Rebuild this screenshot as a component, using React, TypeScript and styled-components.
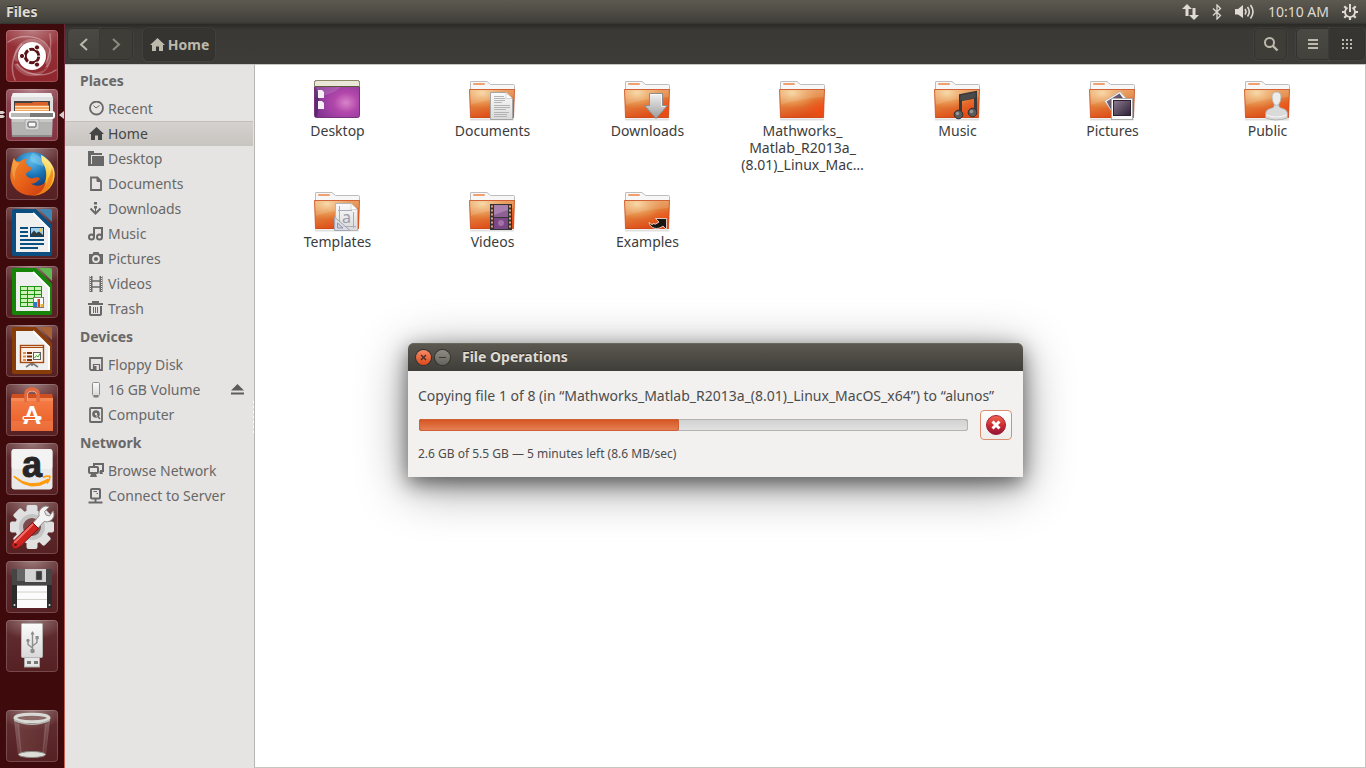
import React from "react";
import styled, { createGlobalStyle, css } from "styled-components";

const GlobalStyle = createGlobalStyle`
  *, *::before, *::after { box-sizing: border-box; }
  html, body { margin: 0; padding: 0; }
  body {
    font-family: "Noto Sans", "Open Sans", sans-serif;
    font-size: 14px;
    color: #3c3c3c;
    background: #ffffff;
  }
  button { font: inherit; color: inherit; border: 0; padding: 0; margin: 0; background: none; cursor: default; }
  a { color: inherit; text-decoration: none; cursor: default; }
  ul { list-style: none; margin: 0; padding: 0; }
  svg { display: block; flex: none; }
`;

/* ---------- page frame ---------- */

const Desktop = styled.div`
  display: flex;
  flex-direction: column;
  min-height: 100vh;
`;

const Panel = styled.header`
  display: flex;
  align-items: center;
  justify-content: space-between;
  height: 24px;
  padding: 0 8px 0 6px;
  color: #dfdbd2;
  background: linear-gradient(#5c5a50, #413f3a 92%, #33312d);
`;

const AppName = styled.span`
  font-weight: 700;
  font-size: 14px;
  line-height: 24px;
  text-shadow: 0 -1px 0 #2d2c28;
`;

const Indicators = styled.div`
  display: flex;
  align-items: center;
  gap: 13px;
`;

const IndicatorButton = styled.button`
  display: flex;
  align-items: center;
  height: 24px;
  font-size: 14px;
  line-height: 24px;
`;

const Workspace = styled.div`
  display: flex;
  flex: 1;
`;

/* ---------- launcher ---------- */

const Launcher = styled.nav`
  display: flex;
  flex-direction: column;
  justify-content: space-between;
  flex: none;
  width: 65px;
  padding: 6px 0 6px 6px;
  background: #3f0a0c;
  border-right: 1px solid;
  border-image: linear-gradient(#6b2636, #8e4049 45%, #c9604f) 1;
`;

const TileStack = styled.div`
  display: flex;
  flex-direction: column;
  gap: 7px;
`;

const Tile = styled.button<{ $tint?: string }>`
  position: relative;
  width: 52px;
  height: 52px;
  border-radius: 4px;
  background:
    radial-gradient(ellipse 34px 20px at 50% 0, rgba(255, 255, 255, 0.36), rgba(255, 255, 255, 0)),
    linear-gradient(rgba(255, 255, 255, 0.13), rgba(255, 255, 255, 0.07)),
    ${(p) => p.$tint ?? "#4a1013"};
  box-shadow: inset 0 0 0 1px rgba(255, 255, 255, 0.18);
`;

const RunningMarks = styled.svg`
  position: absolute;
  left: -6px;
  top: 0;
`;

/* ---------- file manager ---------- */

const FileWindow = styled.main`
  position: relative;
  display: flex;
  flex-direction: column;
  flex: 1;
  min-width: 0;
`;

const Toolbar = styled.div`
  display: flex;
  align-items: flex-start;
  height: 40px;
  padding: 4px 1px 0 2px;
  background: linear-gradient(#2a2926, #3a3935 6px, #3d3c38);
`;

const Spacer = styled.div`
  flex: 1;
`;

const ButtonGroup = styled.div`
  display: flex;
  margin-right: 10px;
`;

const ToolButton = styled.button<{ $side?: "left" | "right"; $look?: "raised" | "pressed"; $wide?: boolean }>`
  display: flex;
  align-items: center;
  justify-content: center;
  width: ${(p) => (p.$wide ? "36px" : "33px")};
  height: 32px;
  color: #bdb9ab;
  border: 1px solid #33322e;
  border-radius: 5px;
  ${(p) => p.$side === "left" && css`border-radius: 5px 0 0 5px;`}
  ${(p) => p.$side === "right" && css`border-radius: 0 5px 5px 0; border-left: 0;`}
  background: ${(p) => (p.$look === "raised" ? "linear-gradient(#4a4943, #42413c)" : p.$look === "pressed" ? "#363531" : "#3e3d38")};
  box-shadow: 0 0 0 1px rgba(255, 255, 255, 0.04);
`;

const CrumbButton = styled(ToolButton)`
  width: 72px;
  height: 33px;
  gap: 3px;
  font-weight: 700;
  font-size: 14px;
  background: #353430;
`;

const SearchButton = styled(ToolButton)`
  margin-right: 9px;
`;

const Columns = styled.div`
  display: flex;
  flex: 1;
`;

const Sidebar = styled.nav`
  position: relative;
  flex: none;
  width: 190px;
  color: #686868;
  background: #e6e4e2;
  border-top: 1px solid #c9c6c2;
  border-right: 1px solid #b8b5b2;
`;

const SectionTitle = styled.h2`
  margin: 0;
  padding-left: 15px;
  font-size: 14px;
  font-weight: 700;
  line-height: 31px;
`;

const PlaceRow = styled.li<{ $active?: boolean }>`
  display: flex;
  align-items: center;
  height: 25px;
  padding: 0 9px 0 23px;
  margin-right: 1px;
  ${(p) =>
    p.$active &&
    css`
      color: #454545;
      background: linear-gradient(#d5d2cf, #c8c4c0);
      box-shadow: inset 0 1px 0 #c3c0bc;
    `}
`;

const PlaceLink = styled.a`
  display: flex;
  align-items: center;
  flex: 1;
  gap: 4px;
  line-height: 25px;
  white-space: nowrap;
`;

const Grip = styled.svg`
  position: absolute;
  right: 0;
  top: 336px;
`;

const IconView = styled.ul`
  display: grid;
  flex: 1;
  grid-template-columns: repeat(auto-fill, 155px);
  grid-auto-rows: max-content;
  row-gap: 17px;
  && { padding: 14px 0 16px 5px; }
  background: #ffffff;
  border: solid #c9c6c2;
  border-width: 1px 1px 1px 0;
`;

const FileLink = styled.a`
  display: flex;
  flex-direction: column;
  align-items: center;
  gap: 1px;
`;

const FileName = styled.span`
  line-height: 17px;
  text-align: center;
  white-space: pre-line;
`;

/* ---------- progress dialog ---------- */

const DialogLayer = styled.div`
  position: absolute;
  inset: 0;
  display: flex;
  justify-content: center;
  align-items: flex-start;
  padding-top: 319px;
  pointer-events: none;
`;

const Dialog = styled.section`
  width: 615px;
  background: #f2f1f0;
  border-radius: 6px 6px 0 0;
  box-shadow: 0 10px 50px rgba(0, 0, 0, 0.42), 0 6px 20px rgba(0, 0, 0, 0.5);
  pointer-events: auto;
`;

const TitleBar = styled.div`
  display: flex;
  align-items: center;
  gap: 4px;
  height: 28px;
  padding-left: 8px;
  border-radius: 6px 6px 0 0;
  background: linear-gradient(#5b5950, #403e39);
  box-shadow: inset 0 1px 0 #6a675c;
`;

const DialogTitle = styled.h1`
  margin: 0 0 0 8px;
  font-size: 14px;
  line-height: 28px;
  color: #dfdbd2;
  text-shadow: 0 -1px 0 #2d2c28;
`;

const WindowButton = styled.button<{ $kind: "close" | "minimize" }>`
  display: flex;
  align-items: center;
  justify-content: center;
  width: 15px;
  height: 15px;
  border-radius: 50%;
  color: #45312a;
  background: ${(p) => (p.$kind === "close" ? "linear-gradient(#f58a68, #df4a1a)" : "linear-gradient(#8d8b83, #65635c)")};
  box-shadow: 0 0 0 1px #35332f;
`;

const DialogBody = styled.div`
  padding: 15px 10px 13px;
  color: #4c4c4c;
`;

const Message = styled.p`
  margin: 0;
  line-height: 20px;
  white-space: nowrap;
`;

const ProgressRow = styled.div`
  display: flex;
  align-items: center;
  gap: 12px;
  margin: 4px 1px;
`;

const Progress = styled.progress`
  appearance: none;
  flex: 1;
  height: 12px;
  min-width: 0;
  border: 0;
  &::-webkit-progress-bar {
    border-radius: 3px;
    background: linear-gradient(#d0d0d0, #e3e3e3);
    box-shadow: inset 0 0 0 1px #b4b2af, inset 0 1px 0 #8f8d8a;
  }
  &::-webkit-progress-value {
    border-radius: 3px;
    background: linear-gradient(#d4531f, #e68257);
    box-shadow: inset 0 0 0 1px #cf5f34, inset 0 1px 0 #a83c10;
  }
`;

const CancelButton = styled.button`
  display: flex;
  align-items: center;
  justify-content: center;
  width: 32px;
  height: 30px;
  border: 1px solid #dc8f70;
  border-radius: 4px;
  background: linear-gradient(#fdfdfd, #ededec);
`;

const Detail = styled.p`
  margin: 0;
  font-size: 12px;
  line-height: 20px;
`;

/* ---------- shared paint ---------- */

const DefsHolder = styled.svg`
  position: absolute;
`;

const SharedDefs = () => (
  <DefsHolder width="0" height="0" aria-hidden="true">
    <defs>
      <linearGradient id="folderBody" x1="0" y1="0" x2="0.35" y2="1">
        <stop offset="0" stopColor="#ecac6c" />
        <stop offset="0.45" stopColor="#e3853f" />
        <stop offset="1" stopColor="#de4d17" />
      </linearGradient>
      <radialGradient id="folderGlow" cx="0.28" cy="0.12" r="0.55">
        <stop offset="0" stopColor="#f8dba6" stopOpacity="0.9" />
        <stop offset="1" stopColor="#f0a860" stopOpacity="0" />
      </radialGradient>
      <radialGradient id="folderHeat" cx="0.98" cy="0.7" r="0.45">
        <stop offset="0" stopColor="#f84a10" stopOpacity="0.8" />
        <stop offset="1" stopColor="#f05018" stopOpacity="0" />
      </radialGradient>
      <linearGradient id="paper" x1="0" y1="0" x2="0" y2="1">
        <stop offset="0" stopColor="#fbfbfb" />
        <stop offset="1" stopColor="#d9d9d9" />
      </linearGradient>
      <linearGradient id="steel" x1="0" y1="0" x2="0" y2="1">
        <stop offset="0" stopColor="#f2f2f2" />
        <stop offset="1" stopColor="#9c9c9c" />
      </linearGradient>
      <radialGradient id="plum" cx="0.7" cy="0.6" r="0.75">
        <stop offset="0" stopColor="#d884c8" />
        <stop offset="0.35" stopColor="#b348ac" />
        <stop offset="1" stopColor="#7c3090" />
      </radialGradient>
      <linearGradient id="photo" x1="0" y1="0" x2="1" y2="1">
        <stop offset="0" stopColor="#8d7a90" />
        <stop offset="1" stopColor="#2b2033" />
      </linearGradient>
      <linearGradient id="orangeBag" x1="0" y1="0" x2="0" y2="1">
        <stop offset="0" stopColor="#f57d48" />
        <stop offset="1" stopColor="#e95b22" />
      </linearGradient>
      <radialGradient id="foxGlobe" cx="0.5" cy="0.2" r="0.7">
        <stop offset="0" stopColor="#62c0ee" />
        <stop offset="0.5" stopColor="#1c76b8" />
        <stop offset="1" stopColor="#12356b" />
      </radialGradient>
      <linearGradient id="foxFur" x1="0" y1="0" x2="1" y2="1">
        <stop offset="0" stopColor="#f08a2c" />
        <stop offset="0.5" stopColor="#e86118" />
        <stop offset="1" stopColor="#c93a12" />
      </linearGradient>
      <linearGradient id="foxTail" x1="0.6" y1="0" x2="0.3" y2="1">
        <stop offset="0" stopColor="#fff0a0" />
        <stop offset="0.5" stopColor="#fbc22c" />
        <stop offset="1" stopColor="#ec6f18" />
      </linearGradient>
      <linearGradient id="redDisc" x1="0" y1="0" x2="0" y2="1">
        <stop offset="0" stopColor="#ef6a52" />
        <stop offset="0.5" stopColor="#cf2b30" />
        <stop offset="1" stopColor="#8e1339" />
      </linearGradient>
      <linearGradient id="glass" x1="0" y1="0" x2="1" y2="0">
        <stop offset="0" stopColor="#a08080" stopOpacity="0.7" />
        <stop offset="0.2" stopColor="#7b4a4a" stopOpacity="0.5" />
        <stop offset="0.8" stopColor="#6b3a3a" stopOpacity="0.5" />
        <stop offset="1" stopColor="#a08080" stopOpacity="0.7" />
      </linearGradient>
    </defs>
  </DefsHolder>
);

/* ---------- launcher art ---------- */

const Art = ({ children }: { children: React.ReactNode }) => (
  <svg width="52" height="52" viewBox="0 0 52 52" aria-hidden="true">
    {children}
  </svg>
);

const DashArt = () => (
  <Art>
    <g fill="none" stroke="#ffffff" strokeLinecap="round">
      <path d="M2 12C14 4 32 5 40 14C46 21 46 30 41 37" strokeOpacity=".35" strokeWidth="1.5" />
      <path d="M44 4C46 16 43 27 40 33" strokeOpacity=".3" strokeWidth="1.5" />
      <path d="M9 50C3 36 8 22 16 14" strokeOpacity=".35" strokeWidth="1.5" />
      <path d="M50 40C38 48 20 46 11 34" strokeOpacity=".35" strokeWidth="1.5" />
    </g>
    <path d="M8 30C7 13 22 5 35 11C46 17 46 33 38 40C46 26 38 12 26 12C15 12 10 20 12 32Z" fill="#fff" opacity=".22" />
    <path d="M12 34C16 45 33 46 43 36C34 52 13 48 8 34Z" fill="#fff" opacity=".2" />
    <circle cx="26" cy="26" r="14" fill="#ffffff" />
    <circle cx="26" cy="26" r="6.8" fill="none" stroke="#5c1216" strokeWidth="3" strokeDasharray="12.8 1.44" strokeDashoffset="-.7" />
    <g fill="#5c1216" stroke="#fff" strokeWidth="1">
      <circle cx="16" cy="26" r="2.6" />
      <circle cx="31" cy="17.4" r="2.6" />
      <circle cx="31" cy="34.6" r="2.6" />
    </g>
  </Art>
);

const CabinetArt = () => (
  <Art>
    <path d="M7 4H45L47 9V24H5V9Z" fill="#dedede" />
    <path d="M7 4H45L46.500 8H5.500Z" fill="#f2f2f2" />
    <rect x="8" y="12" width="36" height="14" fill="#40403f" />
    <path d="M9 14H26L27 13H42V26H9Z" fill="#d9622c" />
    <path d="M9 16.500H43V26H9Z" fill="#f3a45c" />
    <path d="M9 17.500H43M9 20.500H43" stroke="#fde3bd" strokeWidth="1" />
    <path d="M5 24H47L46 48H6Z" fill="#b3b3b2" />
    <path d="M6 30H46V33H6Z" fill="#c8c8c7" />
    <path d="M6 46H46V48H6Z" fill="#8c8c8c" />
    <rect x="19" y="30" width="14" height="11" rx="2" fill="#d6d6d6" stroke="#a8a8a8" />
    <rect x="22" y="33" width="8" height="5" rx="1" fill="#f6f6f6" stroke="#4d4d4d" />
    <rect x="3" y="22" width="46" height="8" rx="3" fill="#ffffff" />
    <rect x="5" y="24" width="19" height="4" fill="#b9b9b7" />
    <rect x="24" y="24" width="23" height="4" fill="#7b7b79" />
  </Art>
);

const FirefoxArt = () => (
  <Art>
    <circle cx="26" cy="25" r="21" fill="url(#foxGlobe)" />
    <path d="M27 5C34 7 39 13 37 19C35 16 31 17 29 15C25 14 22 9 27 5Z" fill="#8fd4f4" opacity=".45" />
    <path d="M35 7C45 12 50 21 48.500 29C47 41 37 48 26 47.500C33 44 39 38 40 30C41 23 39 18 36 14Z" fill="url(#foxTail)" />
    <path d="M46 20C50 32 43 46 28 47.500C36 43 41 38 42 31C44 28 45 24 46 20Z" fill="#ee7a1c" opacity=".75" />
    <path d="M8 10C9 13 11 14 14 13.500C17 11 20 11 21 11C20 13 19.500 15 21 17C22 19 24.500 18.500 25.500 20C25 23 21 24 20 25.500C20 29 24 31 28 30C31 29 33 29 34 31C31 33 30 36 25 35.500C29 39 36 38 40 34C38 42 33 47.500 25 47.500C12 47 3 37 4.500 25C5 20 6 15 8 10Z" fill="url(#foxFur)" />
    <path d="M8 10C9 14 11 15 14 15C10 19 8 26 9 32C6 28 5 17 8 10Z" fill="#f7a94a" opacity=".7" />
  </Art>
);

const DocArt = ({ main, fold, children }: { main: string; fold: string; children: React.ReactNode }) => (
  <Art>
    <path d="M6 4Q6 2 8 2H30L46 18V47Q46 49 44 49H8Q6 49 6 47Z" fill={main} />
    <path d="M33 2H44Q46 2 46 4V15Z" fill={fold} />
    <path d="M10 6H27L43 22V45H10Z" fill="#efefef" />
    <path d="M27 6L43 22V45" fill="none" stroke="#ffffff" strokeWidth="2" />
    {children}
  </Art>
);

const WriterArt = () => (
  <DocArt main="#0b4f80" fold="#3f86b4">
    <path d="M14 21H22M14 25H22M14 29H22M14 33H38M14 37H38M14 41H32" stroke="#0b4f80" strokeWidth="2" />
    <rect x="24.500" y="20.500" width="13" height="9" fill="#9fd0ee" stroke="#0b3f68" />
    <circle cx="34.500" cy="23" r="1.700" fill="#f2c430" />
    <path d="M25 29V27L28 23.500L30.500 26L33 24.500L37 28V29Z" fill="#2f3b42" />
  </DocArt>
);

const CalcArt = () => (
  <DocArt main="#168408" fold="#5fb851">
    <rect x="14" y="20" width="22" height="21" fill="#1f9413" />
    <g fill="#ccf2b8">
      {[21, 25, 29, 33, 37].map((y) => [15, 22, 29].map((x) => <rect key={`${x}-${y}`} x={x} y={y} width="6" height="3" />))}
    </g>
    <rect x="27.500" y="31.500" width="10" height="10" fill="#fff" stroke="#7a7a7a" />
    <rect x="28" y="36" width="3" height="5" fill="#2a7ac0" />
    <rect x="31.500" y="33" width="2.500" height="8" fill="#d8431c" />
    <rect x="34.500" y="38" width="3" height="3" fill="#f0b428" />
  </DocArt>
);

const ImpressArt = () => (
  <DocArt main="#873c0a" fold="#a86236">
    <path d="M26 38L20 42M26 38L32 42M26 38V41" stroke="#7c7c7c" strokeWidth="1.700" />
    <rect x="14.500" y="20.500" width="23" height="17" fill="#fdf3ea" stroke="#a44a10" strokeWidth="1.400" />
    <path d="M15 22.500H37" stroke="#a44a10" />
    <path d="M17 28H20M17 31.500H20M17 35H20" stroke="#e68a4a" strokeWidth="2" />
    <path d="M21 28H26M21 31.500H26M21 35H26" stroke="#74320a" strokeWidth="2" />
    <rect x="27.500" y="27.500" width="7" height="7" fill="#f4fff0" stroke="#606060" />
    <path d="M28.500 33L30.500 30.500L32 32L34 28.500" fill="none" stroke="#35a02a" />
  </DocArt>
);

const SoftwareArt = () => (
  <Art>
    <path d="M6 10H46L47 14V22H5V14Z" fill="#cf4f20" />
    <path d="M5 14H47V47H5Z" fill="url(#orangeBag)" />
    <path d="M5 14H47V17H5Z" fill="#f9986c" opacity=".5" />
    <path d="M5 37H47V47H5Z" fill="#ffffff" opacity=".1" />
    <path d="M20 18V10Q20 5 26 5Q32 5 32 10V18" fill="none" stroke="#e06a42" strokeWidth="3.500" />
    <path d="M21.500 17V10Q22 7 26 7Q30 7 30.500 10" fill="none" stroke="#f9a98a" strokeWidth="1" />
    <text x="26" y="40" textAnchor="middle" fontFamily="Lato, sans-serif" fontWeight="900" fontSize="24" fill="#ffffff">A</text>
    <rect x="16.500" y="32" width="19" height="4" rx="1.500" fill="#ffffff" />
    <rect x="18" y="33" width="11" height="2" fill="#f0652c" />
  </Art>
);

const AmazonArt = () => (
  <Art>
    <rect x="5.500" y="6" width="41" height="40.500" rx="3" fill="#e9e9e9" />
    <rect x="5.500" y="6" width="41" height="20" rx="3" fill="#f7f7f7" opacity=".7" />
    <text x="26" y="33.500" textAnchor="middle" fontFamily='"Liberation Sans", sans-serif' fontWeight="700" fontSize="36" fill="#262626" stroke="#262626" strokeWidth="1">a</text>
    <path d="M8 33Q25 47 42 36L43 38Q25 50 8 34Z" fill="#ff9a0a" stroke="#ff9a0a" />
    <path d="M37 34.500Q41 32.500 44 33.500Q44 37 41 40.500" fill="none" stroke="#ff9a0a" strokeWidth="1.700" />
  </Art>
);

const SettingsArt = () => (
  <Art>
    <g fill="#e0e0e0">
      {[0, 45, 90, 135].map((a) => (
        <rect key={a} x="20.500" y="3" width="11" height="44" rx="2" transform={`rotate(${a} 26 25)`} />
      ))}
      <circle cx="26" cy="25" r="17" />
    </g>
    <circle cx="26" cy="25" r="13" fill="#c4c4c4" />
    <circle cx="26" cy="25" r="9" fill="#7c4a4b" />
    <path d="M26 22L33 14Q32 8 37 5Q40 3 43 5L38.500 9.500L40 13L43.500 14L47 9Q49.500 14 45.500 18Q42 21 38 19.500L31 27Z" fill="#f3f3f3" stroke="#8f8f8f" />
    <path d="M26.500 20.500L32.500 26.500L13 45.500Q9 48 6.500 45.500Q4.500 43 7 39.500Z" fill="#cf2420" stroke="#7c1010" />
    <path d="M26.500 22.500L9 40" stroke="#f2706a" strokeWidth="2" strokeLinecap="round" />
    <circle cx="9.500" cy="42.800" r="1.400" fill="#5c0f0f" />
  </Art>
);

const FloppyArt = () => (
  <Art>
    <path d="M6 8H44L46 10V47H6Z" fill="#2c2c2c" />
    <path d="M6 8H44L46 10V24H6Z" fill="#454545" />
    <rect x="11" y="8" width="8" height="12" fill="#666" />
    <rect x="19" y="8" width="21" height="13" fill="#d4d4d4" />
    <rect x="30" y="10" width="6" height="9" fill="#3a3a3a" stroke="#9a9a9a" strokeWidth=".5" />
    <rect x="11" y="24" width="30" height="23" fill="#fbfbfb" />
    <path d="M11 31H41M11 38.500H41" stroke="#d0d0c8" />
    <path d="M11 24.500H41" stroke="#8a8a8a" />
    <circle cx="8.500" cy="44" r="1" fill="#ddd" />
    <circle cx="43.500" cy="44" r="1" fill="#ddd" />
  </Art>
);

const UsbArt = () => (
  <Art>
    <rect x="18.500" y="36" width="15" height="11" fill="#e6e6e6" stroke="#a8a8a8" />
    <rect x="21" y="41" width="4" height="3" fill="#777" />
    <rect x="28" y="41" width="4" height="3" fill="#777" />
    <rect x="15.500" y="3.500" width="21" height="34" rx="1" fill="url(#paper)" stroke="#b5b5b5" />
    <g fill="none" stroke="#8d8d8d" strokeWidth="1.400">
      <path d="M26.500 12V31M26.500 28L22 24.500V21M26.500 26L31 22.500V18" />
    </g>
    <g fill="#8d8d8d">
      <path d="M24.500 14.500L26.500 11L28.500 14.500Z" />
      <circle cx="22" cy="20.500" r="1.700" />
      <rect x="29.500" y="16" width="3.200" height="3.200" />
      <circle cx="26.500" cy="31" r="2.300" />
    </g>
  </Art>
);

const TrashArt = () => (
  <Art>
    <path d="M8 9L12 45Q26 50 40 45L44 9Z" fill="url(#glass)" />
    <path d="M12 14L15 43M40 14L37 43" stroke="#fff" strokeOpacity=".15" strokeWidth="1.500" />
    <ellipse cx="26" cy="44.500" rx="13.500" ry="3" fill="#deded9" stroke="#8b8b88" />
    <ellipse cx="26" cy="8" rx="17" ry="3.800" fill="#8a6868" stroke="#d9d9d5" strokeWidth="3" />
    <path d="M8 9Q26 18 44 9V11Q26 19 8 11Z" fill="#b4b4b0" />
  </Art>
);

const launcherItems: { name: string; art: React.ReactNode; tint?: string }[] = [
  { name: "Dash", art: <DashArt />, tint: "#86161d" },
  { name: "Files", art: <CabinetArt />, tint: "#7a2634" },
  { name: "Firefox", art: <FirefoxArt /> },
  { name: "LibreOffice Writer", art: <WriterArt /> },
  { name: "LibreOffice Calc", art: <CalcArt /> },
  { name: "LibreOffice Impress", art: <ImpressArt /> },
  { name: "Ubuntu Software Center", art: <SoftwareArt /> },
  { name: "Amazon", art: <AmazonArt /> },
  { name: "System Settings", art: <SettingsArt /> },
  { name: "Floppy Disk", art: <FloppyArt /> },
  { name: "16 GB Volume", art: <UsbArt /> },
];

/* ---------- symbolic icons ---------- */

const Symbol16 = ({ children, color = "currentColor" }: { children: React.ReactNode; color?: string }) => (
  <svg width="16" height="16" viewBox="0 0 16 16" fill="none" stroke={color} strokeWidth="2" aria-hidden="true">
    {children}
  </svg>
);

const HomeSymbol = () => (
  <Symbol16>
    <path d="M8.500 1L1 8H3V14H7V9.500H10V14H14V8H16Z" fill="currentColor" stroke="none" />
  </Symbol16>
);

const symbols: Record<string, React.ReactNode> = {
  recent: (
    <Symbol16>
      <circle cx="8.500" cy="7" r="6.500" strokeWidth="1.800" />
      <path d="M5.500 4.500L8 7L11.500 4.500" strokeWidth="1" />
    </Symbol16>
  ),
  home: <HomeSymbol />,
  desktop: (
    <Symbol16>
      <path d="M0 14V0H6V2H14V4H3V14Z" fill="currentColor" stroke="none" />
      <path d="M4 5H16V15H4ZM0 13H5V15H0Z" fill="currentColor" stroke="none" />
    </Symbol16>
  ),
  documents: (
    <Symbol16>
      <path d="M3 1.500H9.500L13 5V14H3Z" strokeWidth="1.800" />
      <path d="M9 1.500V5.500H13" fill="currentColor" strokeWidth="1" />
    </Symbol16>
  ),
  downloads: (
    <Symbol16>
      <path d="M2.500 7.500L7.500 12.500L12.500 7.500" />
      <path d="M6 1H9V3.500H6ZM6 5H9V7.500H6ZM7 7H8V12H7Z" fill="currentColor" stroke="none" />
    </Symbol16>
  ),
  music: (
    <Symbol16>
      <circle cx="3.500" cy="11" r="2.500" />
      <circle cx="11.500" cy="11" r="2.500" />
      <path d="M6 11V2H14V11" />
    </Symbol16>
  ),
  pictures: (
    <Symbol16>
      <path d="M1 3H4.500L5.500 1H10.500L11.500 3H15V13H1Z" fill="currentColor" stroke="none" />
      <circle cx="8" cy="8" r="3" stroke="#e6e4e2" strokeWidth="1.800" />
    </Symbol16>
  ),
  videos: (
    <Symbol16>
      <path d="M3 0V16M13 0V16" strokeWidth="3" />
      <path d="M4 5H12M4 11H12" strokeWidth="1.300" />
      <path d="M2.500 0V16M13.500 0V16" stroke="#e6e4e2" strokeWidth="1" strokeDasharray="1 1" />
    </Symbol16>
  ),
  trash: (
    <Symbol16>
      <path d="M0 3H15" />
      <path d="M4 0H11V2H4Z" fill="currentColor" stroke="none" />
      <path d="M2 5V13Q2 14 3 14H12Q13 14 13 13V5" />
      <path d="M5.500 6V12M7.500 6V12M9.500 6V12" strokeWidth="1" />
    </Symbol16>
  ),
  floppy: (
    <Symbol16>
      <path d="M5 13H3.500Q2 13 2 11.500V1H14V13H11.500" strokeWidth="1.800" />
      <path d="M5.500 7.500H11.500V13.500H5.500Z" strokeWidth="1.200" />
      <path d="M6 9H8.500V13H6Z" fill="currentColor" stroke="none" />
    </Symbol16>
  ),
  volume: (
    <Symbol16>
      <rect x="4.500" y=".5" width="7" height="13" rx="1" fill="url(#paper)" stroke="#8c8c8c" strokeWidth="1" />
      <path d="M5.500 14.500H10.500" stroke="#7c7c7c" strokeWidth="2" />
    </Symbol16>
  ),
  computer: (
    <Symbol16>
      <rect x="2" y="1" width="12" height="14" rx="1" strokeWidth="1.800" />
      <circle cx="8" cy="7" r="3.800" fill="currentColor" stroke="none" />
      <circle cx="8" cy="7" r="1.200" fill="#e6e4e2" stroke="none" />
      <path d="M8.500 8.500L12 12.500" strokeWidth="1.400" stroke="#e6e4e2" />
      <path d="M9.500 9L12 12" strokeWidth="1.400" />
    </Symbol16>
  ),
  network: (
    <Symbol16>
      <path d="M6 3V1H15V8H12" />
      <rect x="1" y="4" width="9" height="6" rx="1" />
      <path d="M3 11H8L9 14H2ZM11.500 8H14L15 11H11.500Z" fill="currentColor" stroke="none" />
    </Symbol16>
  ),
  server: (
    <Symbol16>
      <rect x="3" y="1" width="9" height="9.500" rx="1" />
      <path d="M7.500 11V15M0.500 14.500H14.500" />
      <path d="M5.500 3.500H9M8.500 5.500H10" strokeWidth="1" />
    </Symbol16>
  ),
};

const sections: { title: string; rows: { label: string; icon: string; active?: boolean; eject?: boolean }[] }[] = [
  {
    title: "Places",
    rows: [
      { label: "Recent", icon: "recent" },
      { label: "Home", icon: "home", active: true },
      { label: "Desktop", icon: "desktop" },
      { label: "Documents", icon: "documents" },
      { label: "Downloads", icon: "downloads" },
      { label: "Music", icon: "music" },
      { label: "Pictures", icon: "pictures" },
      { label: "Videos", icon: "videos" },
      { label: "Trash", icon: "trash" },
    ],
  },
  {
    title: "Devices",
    rows: [
      { label: "Floppy Disk", icon: "floppy" },
      { label: "16 GB Volume", icon: "volume", eject: true },
      { label: "Computer", icon: "computer" },
    ],
  },
  {
    title: "Network",
    rows: [
      { label: "Browse Network", icon: "network" },
      { label: "Connect to Server", icon: "server" },
    ],
  },
];

/* ---------- folder art ---------- */

const FileArt = ({ children }: { children: React.ReactNode }) => (
  <svg width="47" height="42" viewBox="0 0 47 42" aria-hidden="true">
    {children}
  </svg>
);

const Folder = ({ children }: { children?: React.ReactNode }) => (
  <FileArt>
    <path d="M1 40.500H45" stroke="#000" strokeOpacity=".12" strokeWidth="2" />
    <path d="M1.500 12V3Q1.500 2.500 2 2.500H18L21.500 5.500H44.500Q45.500 5.500 45.500 6.500V12Z" fill="#f7f7f7" stroke="#bdbdbd" />
    <path d="M5 5H15" stroke="#f0a070" strokeWidth="2" strokeLinecap="round" />
    <path d="M0.500 10.500H45.500L44.500 39H1.500Z" fill="url(#folderBody)" />
    <path d="M0.500 10.500H45.500L44.500 39H1.500Z" fill="url(#folderHeat)" />
    <path d="M0.500 10.500H45.500L44.500 39H1.500Z" fill="url(#folderGlow)" />
    <path d="M1 11H45L44.800 18Q22 19 1.500 26Z" fill="#fff" opacity=".12" />
    <path d="M0.500 10.500H45.500L44.500 38.500H1.500Z" fill="none" stroke="#c94a1c" strokeOpacity=".8" />
    {children}
  </FileArt>
);

const fileArt: Record<string, React.ReactNode> = {
  desktop: (
    <FileArt>
      <rect x=".5" y="1.500" width="45" height="37" rx="2" fill="url(#plum)" stroke="#77307c" />
      <path d="M1 7H28Q20 16 1 18Z" fill="#fff" opacity=".14" />
      <path d="M1 8Q8 18 3 38H1Z" fill="#352050" opacity=".5" />
      <path d="M.5 3.500Q.5 1.500 2.500 1.500H43.500Q45.500 1.500 45.500 3.500V7.500H.5Z" fill="#e9e7d8" stroke="#8d8a6a" />
      <path d="M1 7.500H45" stroke="#5c5a3a" />
      <path d="M4 11H8L10 13V19H4ZM4 22H8L10 24V30H4Z" fill="#f3eff3" />
    </FileArt>
  ),
  documents: (
    <Folder>
      <path d="M21.500 13.500H37L43.500 20V40.500H21.500Z" fill="url(#paper)" stroke="#a5a5a5" />
      <path d="M37 13.500V19.500H43.500Z" fill="#fff" stroke="#c5c5c5" strokeWidth=".7" />
      <path d="M25 17.500H35M25 19.500H36M25 21.500H36M25 23.500H33M25 26.500H41M25 28.500H41M25 30.500H37M25 33.500H40M25 35.500H38M25 37.500H38" stroke="#b4b4b4" strokeWidth="1" />
    </Folder>
  ),
  downloads: (
    <Folder>
      <path d="M25.500 14.500H38.500V26.500H43.500L32 39.500L20.500 26.500H25.500Z" fill="url(#steel)" stroke="#8c8c8c" />
      <path d="M26.500 15.500H37.500V27.500H41" fill="none" stroke="#fff" strokeOpacity=".7" />
    </Folder>
  ),
  folder: <Folder />,
  music: (
    <Folder>
      <path d="M26.500 37V16.500L41.500 13.500V33" fill="none" stroke="#3a3a3a" strokeWidth="3" />
      <path d="M26 16L42 13V19L26 22Z" fill="#4a4a4a" stroke="#333" strokeWidth=".7" />
      <circle cx="24.500" cy="35.500" r="4.300" fill="#5c5c5c" stroke="#303030" />
      <circle cx="38.500" cy="33.500" r="4.300" fill="#5c5c5c" stroke="#303030" />
      <circle cx="23.500" cy="34.500" r="1.700" fill="#9a9a9a" />
      <circle cx="37.500" cy="32.500" r="1.700" fill="#9a9a9a" />
    </Folder>
  ),
  pictures: (
    <Folder>
      <path d="M15.500 22L31 12.500L38 20L26 37Z" fill="#f5f5f5" stroke="#aaa" strokeWidth=".7" />
      <path d="M17.500 22.500L30.500 14.500L36 22L24 34Z" fill="url(#photo)" />
      <rect x="22.500" y="19.500" width="21" height="21" fill="#fafafa" stroke="#aaa" />
      <rect x="24.500" y="21.500" width="17" height="15" fill="url(#photo)" stroke="#2b2033" />
    </Folder>
  ),
  public: (
    <Folder>
      <path d="M30 23V27.500Q29 29 26 29.500Q22 30.500 21.500 34V39Q32 43 43.500 39V34Q43 30.500 39 29.500Q36 29 35 27.500V23Z" fill="#dadada" stroke="#a6a6a6" strokeWidth=".8" />
      <path d="M32.500 13Q37 13 37 18Q37 22 35 25Q32.500 28 30 25Q28 22 28 18Q28 13 32.500 13Z" fill="#ececec" stroke="#b0b0b0" strokeWidth=".8" />
      <path d="M22.500 36Q32 40 42.500 36" fill="none" stroke="#fff" strokeOpacity=".8" />
    </Folder>
  ),
  templates: (
    <Folder>
      <path d="M21.500 13.500H37L43.500 20V40.500H21.500Z" fill="url(#paper)" stroke="#b5b5b5" />
      <path d="M37 13.500V19.500H43.500Z" fill="#fff" stroke="#c5c5c5" strokeWidth=".7" />
      <path d="M24 20.500H38M25.500 16V38M39.500 22V38M24 36.500H42" stroke="#a9abb8" strokeWidth="1" />
      <text x="32.500" y="32.500" textAnchor="middle" fontFamily='"Noto Sans", sans-serif' fontSize="16" fill="#9a9cab">a</text>
      <path d="M20.500 27V40.500H36Z" fill="#dcdfe8" fillOpacity=".8" stroke="#a2a4b4" />
      <path d="M23.500 33V38H29Z" fill="none" stroke="#8c8fa5" />
    </Folder>
  ),
  videos: (
    <Folder>
      <rect x="21" y="14" width="22" height="26" fill="#333" />
      <rect x="25" y="15" width="14" height="12" fill="#8d6194" />
      <rect x="25" y="28" width="14" height="11" fill="#7b4784" />
      <path d="M25 15H39V20L25 25Z" fill="#c5a0c8" opacity=".5" />
      <circle cx="32" cy="33" r="3" fill="#b583b8" opacity=".7" />
      <path d="M23 15.500V39M41 15.500V39" stroke="#e8a078" strokeWidth="2" strokeDasharray="2 2" />
    </Folder>
  ),
  examples: (
    <Folder>
      <path d="M25 32.500C26 38.500 34 40.500 39 36L42.500 39.500V28.500H31.500L35 32Q31 35.500 29 33.500Q29 36 25 32.500Z" fill="#1b1512" stroke="#f4ece6" strokeWidth=".8" />
    </Folder>
  ),
};

const files = [
  { name: "Desktop", art: "desktop" },
  { name: "Documents", art: "documents" },
  { name: "Downloads", art: "downloads" },
  { name: "Mathworks_\nMatlab_R2013a_\n(8.01)_Linux_Mac…", art: "folder" },
  { name: "Music", art: "music" },
  { name: "Pictures", art: "pictures" },
  { name: "Public", art: "public" },
  { name: "Templates", art: "templates" },
  { name: "Videos", art: "videos" },
  { name: "Examples", art: "examples" },
];

/* ---------- app ---------- */

export default function App() {
  return (
    <Desktop>
      <GlobalStyle />
      <SharedDefs />
      <Panel>
        <AppName>Files</AppName>
        <Indicators>
          <IndicatorButton aria-label="Network">
            <svg width="17" height="16" viewBox="0 0 17 16" fill="currentColor">
              <path d="M5 0L10 5H6.500V12H3.500V5H0Z" />
              <path d="M12 16L7 11H10.500V4H13.500V11H17Z" />
            </svg>
          </IndicatorButton>
          <IndicatorButton aria-label="Bluetooth">
            <svg width="10" height="16" viewBox="0 0 10 16" fill="none" stroke="currentColor" strokeWidth="1.300">
              <path d="M1 4.500L8.500 11.500L5 15V1L8.500 4.500L1 11.500" />
            </svg>
          </IndicatorButton>
          <IndicatorButton aria-label="Sound">
            <svg width="20" height="16" viewBox="0 0 20 16" fill="none" stroke="currentColor" strokeWidth="1.600">
              <path d="M0 5H3L8 1V14L3 10.500H0Z" fill="currentColor" stroke="none" />
              <path d="M10 5Q12 7.800 10 10.500M12.500 3Q16 7.800 12.500 12.500" />
              <path d="M15.500 1Q20.500 7.800 15.500 14.500" />
            </svg>
          </IndicatorButton>
          <IndicatorButton>10:10 AM</IndicatorButton>
          <IndicatorButton aria-label="Session">
            <svg width="16" height="16" viewBox="0 0 16 16" fill="none" stroke="currentColor">
              <path d="M5.500 3.700A5 5 0 1 0 10.500 3.700" strokeWidth="1.800" />
              <path d="M8 0V8" strokeWidth="2" />
              <path d="M3 8H0M16 8H13M8 13V16M2.300 2.300L4.500 4.500M13.700 2.300L11.500 4.500M2.300 13.700L4.500 11.500M13.700 13.700L11.500 11.500" strokeWidth="2.200" />
            </svg>
          </IndicatorButton>
        </Indicators>
      </Panel>

      <Workspace>
        <Launcher aria-label="Launcher">
          <TileStack>
            {launcherItems.map((item) => (
              <Tile key={item.name} aria-label={item.name} $tint={item.tint}>
                {item.art}
                {item.name === "Files" && (
                  <RunningMarks width="64" height="52" viewBox="0 0 64 52" fill="#d9cfd0">
                    <path d="M0 22H3L5 23.500L3 25H0ZM0 26H3L5 27.500L3 29H0ZM64 22V30L59 26Z" />
                  </RunningMarks>
                )}
              </Tile>
            ))}
          </TileStack>
          <Tile aria-label="Trash">
            <TrashArt />
          </Tile>
        </Launcher>

        <FileWindow>
          <Toolbar>
            <ButtonGroup>
              <ToolButton $side="left" $look="raised" aria-label="Back">
                <svg width="9" height="13" viewBox="0 0 9 13" fill="none" stroke="currentColor" strokeWidth="2">
                  <path d="M8 1L2 6.500L8 12" />
                </svg>
              </ToolButton>
              <ToolButton $side="right" aria-label="Forward">
                <svg width="9" height="13" viewBox="0 0 9 13" fill="none" stroke="#8d8a80" strokeWidth="2">
                  <path d="M1 1L7 6.500L1 12" />
                </svg>
              </ToolButton>
            </ButtonGroup>
            <CrumbButton>
              <HomeSymbol />
              Home
            </CrumbButton>
            <Spacer />
            <SearchButton aria-label="Search">
              <svg width="16" height="16" viewBox="0 0 16 16" fill="none" stroke="currentColor">
                <circle cx="6.500" cy="6.500" r="4.500" strokeWidth="2" />
                <path d="M10 10L14.500 14.500" strokeWidth="2.400" />
              </svg>
            </SearchButton>
            <ToolButton $side="left" $look="raised" aria-label="List view">
              <svg width="10" height="10" viewBox="0 0 10 10" stroke="currentColor" strokeWidth="2">
                <path d="M0 1H10M0 5H10M0 9H10" />
              </svg>
            </ToolButton>
            <ToolButton $side="right" $look="pressed" $wide aria-label="Icon view">
              <svg width="10" height="10" viewBox="0 0 10 10" stroke="currentColor" strokeWidth="2" strokeDasharray="2 2">
                <path d="M0 1H10M0 5H10M0 9H10" />
              </svg>
            </ToolButton>
          </Toolbar>

          <Columns>
            <Sidebar aria-label="Places">
              {sections.map((section) => (
                <React.Fragment key={section.title}>
                  <SectionTitle>{section.title}</SectionTitle>
                  <ul>
                    {section.rows.map((row) => (
                      <PlaceRow key={row.label} $active={row.active}>
                        <PlaceLink href="#">
                          {symbols[row.icon]}
                          {row.label}
                        </PlaceLink>
                        {row.eject && (
                          <button aria-label="Eject">
                            <svg width="13" height="12" viewBox="0 0 13 12" fill="#5c5c5c">
                              <path d="M6.500 0L13 6.500H0ZM0 8.500H13V10.500H0Z" />
                            </svg>
                          </button>
                        )}
                      </PlaceRow>
                    ))}
                  </ul>
                </React.Fragment>
              ))}
              <Grip width="1" height="32" viewBox="0 0 1 32" stroke="#ffffff" strokeWidth="1" strokeDasharray="2 3">
                <path d="M.5 0V32" />
              </Grip>
            </Sidebar>

            <IconView>
              {files.map((file) => (
                <li key={file.name}>
                  <FileLink href="#">
                    {fileArt[file.art]}
                    <FileName>{file.name}</FileName>
                  </FileLink>
                </li>
              ))}
            </IconView>
          </Columns>

          <DialogLayer>
            <Dialog role="dialog" aria-labelledby="dialog-title">
              <TitleBar>
                <WindowButton $kind="close" aria-label="Close">
                  <svg width="7" height="7" viewBox="0 0 7 7" stroke="currentColor" strokeWidth="1.400">
                    <path d="M1 1L6 6M6 1L1 6" />
                  </svg>
                </WindowButton>
                <WindowButton $kind="minimize" aria-label="Minimize">
                  <svg width="7" height="7" viewBox="0 0 7 7" stroke="#3c3b37" strokeWidth="1">
                    <path d="M0 3.500H7" />
                  </svg>
                </WindowButton>
                <DialogTitle id="dialog-title">File Operations</DialogTitle>
              </TitleBar>
              <DialogBody>
                <Message id="copy-message">
                  Copying file 1 of 8 (in “Mathworks_Matlab_R2013a_(8.01)_Linux_MacOS_x64”) to “alunos”
                </Message>
                <ProgressRow>
                  <Progress value={2.6} max={5.5} aria-labelledby="copy-message" />
                  <CancelButton aria-label="Cancel">
                    <svg width="20" height="20" viewBox="0 0 20 20">
                      <circle cx="10" cy="10" r="9.500" fill="url(#redDisc)" stroke="#a32034" />
                      <path d="M6.500 6.500L13.500 13.500M13.500 6.500L6.500 13.500" stroke="#ffffff" strokeWidth="3" />
                    </svg>
                  </CancelButton>
                </ProgressRow>
                <Detail>2.6 GB of 5.5 GB — 5 minutes left (8.6 MB/sec)</Detail>
              </DialogBody>
            </Dialog>
          </DialogLayer>
        </FileWindow>
      </Workspace>
    </Desktop>
  );
}
